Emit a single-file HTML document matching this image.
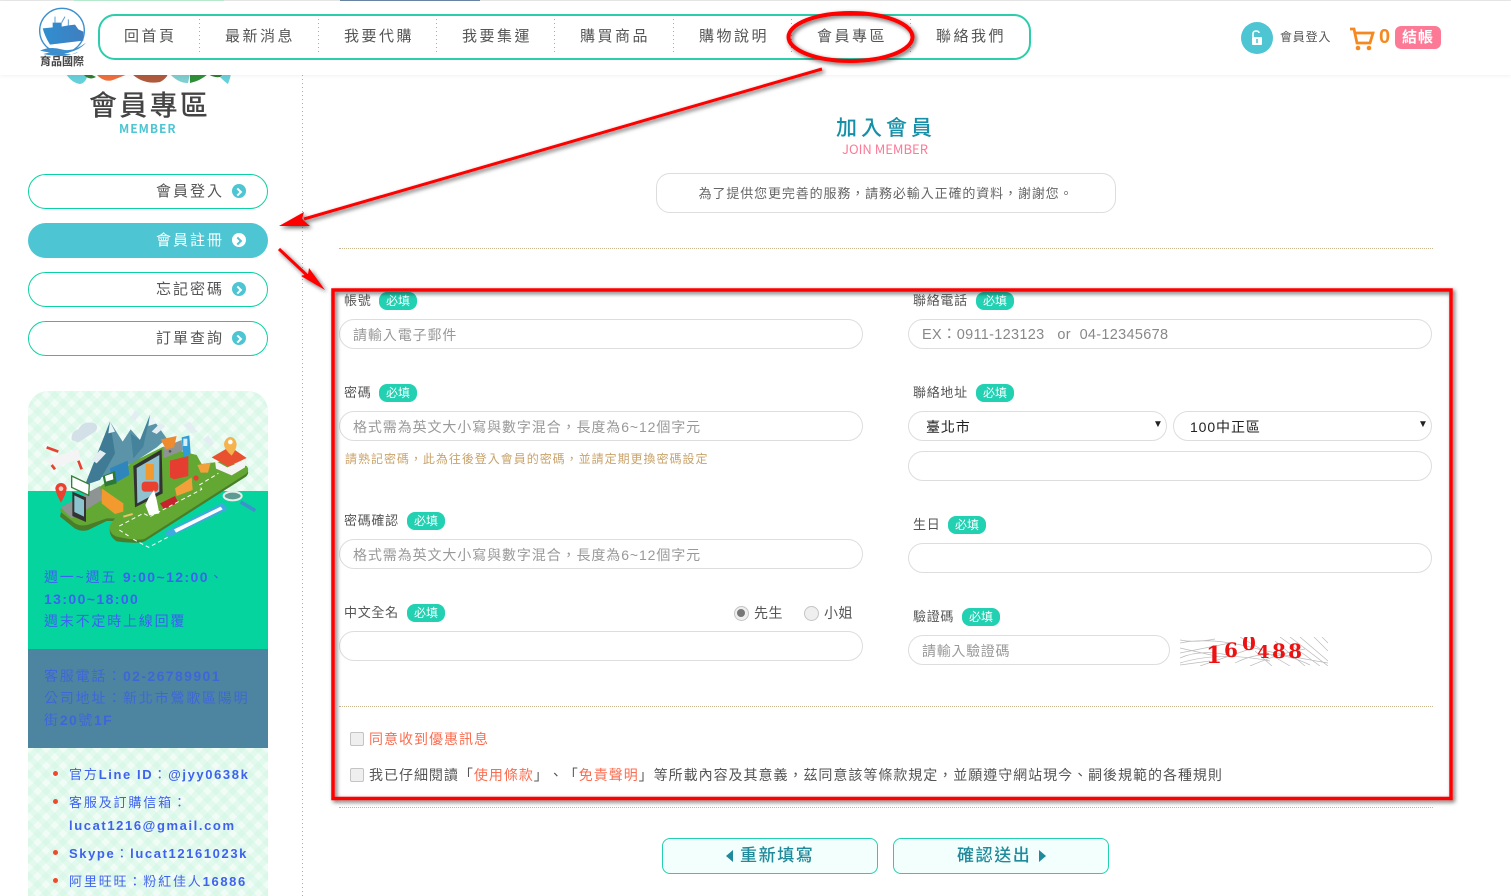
<!DOCTYPE html>
<html lang="zh-Hant"><head><meta charset="utf-8"><title>加入會員</title>
<style>
html,body{margin:0;padding:0;background:#fff}
#p{position:relative;width:1511px;height:896px;overflow:hidden;background:#fff;font-family:"Liberation Sans","Noto Sans CJK TC",sans-serif;color:#555;text-spacing-trim:space-all}
#p div,#p>svg{position:absolute}
.t{white-space:nowrap;line-height:20px}
.nav{top:27px;height:20px;font-size:15px;letter-spacing:2.5px;color:#555;white-space:nowrap;line-height:20px}
.sep{top:19px;height:36px;width:1px;background:repeating-linear-gradient(#aaa 0 1px,transparent 1px 4px)}
.side{left:28px;width:238px;height:33px;border:1px solid #0bd2a4;border-radius:18px;background:#fff}
.side .l{left:127px;top:7px;font-size:15px;letter-spacing:2px;color:#555;line-height:20px;white-space:nowrap}
.side .c{left:203px;top:9px;width:14px;height:14px;border-radius:50%;background:#4dc5d2}
.side .c:after{content:"";position:absolute;left:3px;top:4.500px;width:4px;height:4px;border-top:2px solid #fff;border-right:2px solid #fff;transform:rotate(45deg)}
.on{background:#4dc5d2;height:35px;border:0;width:240px}
.on .l{color:#fff;left:128px;top:8px}
.on .c{background:#fff;left:204px;top:10px}
.on .c:after{border-color:#4dc5d2}
.lb{font-size:13px;letter-spacing:.7px;color:#555;line-height:18px;white-space:nowrap}
.req{width:38px;height:18px;border-radius:8px;background:#22d0b2;color:#fff;font-size:12px;line-height:18px;text-align:center}
.in{height:28px;border:1px solid #ddd;border-radius:15px;background:#fff;color:#999;font-size:14px;letter-spacing:.9px;line-height:30px;white-space:nowrap}
.in span{padding-left:13px}
.blue{color:#3b62f0;font-size:14px;letter-spacing:1.8px;line-height:22px}
.blue b{letter-spacing:1.4px}
.li{left:69px;font-size:13px;letter-spacing:1.85px;color:#3f62ee;line-height:20px;white-space:nowrap}
.li b{letter-spacing:1.6px}
.pat{background-color:#f2fcf7;background-image:repeating-linear-gradient(45deg,rgba(205,245,225,.42) 0 6px,transparent 6px 12px),repeating-linear-gradient(-45deg,rgba(205,245,225,.42) 0 6px,transparent 6px 12px)}
.dot{width:5px;height:5px;border-radius:50%;background:#ee4a2c;left:53px}
.cb{width:12px;height:12px;border:1px solid #c4c4c4;background:#efefef;border-radius:2px}
.btn{width:214px;height:34px;border:1px solid #22d0b2;border-radius:8px;background:#f2fffd}
.bt{top:846px;font-size:17px;font-weight:500;letter-spacing:1.6px;color:#1f8a9c;line-height:20px;white-space:nowrap}
.hd{font-family:"Noto Sans CJK TC",sans-serif}
</style></head><body><div id="p">

<!-- top strip remnants -->
<div style="left:0;top:0;width:1511px;height:1px;background:#e8e8e8"></div>
<div style="left:74px;top:0;width:150px;height:1px;background:#b9ecd0"></div>
<div style="left:340px;top:0;width:140px;height:1px;background:#6a87a5"></div>

<!-- sidebar title art -->
<svg style="left:60px;top:74px" width="175" height="12" viewBox="0 0 175 12">
<path d="M6 0Q12 9 20 10Q26 9 28 0Z" fill="#66cfd9"/><path d="M23 0Q29 7 36 3L30 0Z" fill="#2d7f2f"/>
<path d="M36 0Q44 9 53 6L68 0Z" fill="#ef6f3d"/><path d="M72 0Q84 11 100 8Q106 5 108 0Z" fill="#b05a3c"/>
<path d="M110 0Q118 9 128 9L130 0Z" fill="#7fced0"/><path d="M130 0L130 9Q140 7 148 0Z" fill="#2f8f38"/>
<path d="M148 0Q154 4 160 3L164 0Z" fill="#2d7f2f"/><path d="M160 3Q166 9 168 10Q170 5 171 0H165Z" fill="#66cfd9"/>
</svg>
<div class="t" style="left:89px;top:89px;font-size:28px;line-height:34px;letter-spacing:2.300px;color:#444;font-weight:500">會員專區</div>
<div class="t hd" style="left:119px;top:121px;font-size:12px;line-height:16px;letter-spacing:1px;color:#4dc5d2;font-weight:bold">MEMBER</div>

<!-- header -->
<div style="left:0;top:1px;width:1511px;height:74px;background:#fff;box-shadow:0 1px 4px rgba(0,0,0,.06)"></div>
<svg style="left:38px;top:7px" width="50" height="50" viewBox="114 21 150 150">
<defs><linearGradient id="sh" x1="0" x2="1"><stop offset="0" stop-color="#2f8fd0"/><stop offset="1" stop-color="#3f7fc0"/></linearGradient></defs>
<circle cx="186" cy="92" r="67" fill="#fff" stroke="#3b8fcf" stroke-width="4"/>
<path d="M128 85L158 82V68H185V80L205 76L225 74L235 88L250 95L250 122L200 128L150 134Q135 110 128 85Z" fill="url(#sh)"/>
<path d="M165 68V50M185 68L195 50M205 76V58" stroke="#5a9dd0" stroke-width="3" fill="none"/>
<path d="M120 152Q150 138 185 148T258 128Q235 155 195 158T120 152Z" fill="#3b8fcf"/>
<path d="M130 162Q160 152 190 160T235 155Q205 170 175 168T130 162Z" fill="#3b8fcf"/>
</svg>
<div class="t" style="left:40px;top:55px;font-size:11px;line-height:15px;font-weight:bold;color:#444">育品國際</div>

<div style="left:98px;top:14px;width:929px;height:42px;border:2px solid #2ccdab;border-radius:17px;background:#fff"></div>
<div class="nav" style="left:124px">回首頁</div><div class="sep" style="left:199px"></div>
<div class="nav" style="left:225px">最新消息</div><div class="sep" style="left:318px"></div>
<div class="nav" style="left:344px">我要代購</div><div class="sep" style="left:436px"></div>
<div class="nav" style="left:462px">我要集運</div><div class="sep" style="left:554px"></div>
<div class="nav" style="left:580px">購買商品</div><div class="sep" style="left:673px"></div>
<div class="nav" style="left:699px">購物說明</div><div class="sep" style="left:791px"></div>
<div class="nav" style="left:817px">會員專區</div><div class="sep" style="left:910px"></div>
<div class="nav" style="left:936px">聯絡我們</div>

<div style="left:1241px;top:22px;width:32px;height:32px;border-radius:50%;background:#4dc5d2"></div>
<svg style="left:1249px;top:29px" width="16" height="18" viewBox="0 0 16 18"><path d="M4 8V5Q4 2 7 2T10 4" fill="none" stroke="#fff" stroke-width="1.6"/><rect x="3" y="8" width="10" height="8" rx="1" fill="#fff"/><rect x="7.200" y="10" width="1.6" height="4" fill="#4dc5d2"/></svg>
<div class="t" style="left:1280px;top:27px;font-size:12px;letter-spacing:.8px;color:#555">會員登入</div>
<svg style="left:1348px;top:26px" width="28" height="26" viewBox="0 0 28 26"><path d="M2 3H6L9 17H22L25 7H7" fill="none" stroke="#f5891f" stroke-width="2.800"/><circle cx="10" cy="22" r="2.300" fill="#f5891f"/><circle cx="21" cy="22" r="2.300" fill="#f5891f"/></svg>
<div class="t" style="left:1379px;top:27px;font-size:20px;font-weight:bold;color:#f5891f">0</div>
<div style="left:1395px;top:26px;width:46px;height:23px;border-radius:6px;background:#fd7a97;color:#fff;font-size:15px;font-weight:bold;text-align:center;line-height:23px;letter-spacing:1px">結帳</div>

<!-- divider -->
<div style="left:302px;top:75px;height:821px;width:1px;background:repeating-linear-gradient(#aaa 0 1px,transparent 1px 4px)"></div>

<!-- side menu -->
<div class="side" style="top:174px"><div class="l">會員登入</div><div class="c"></div></div>
<div class="side on" style="top:223px"><div class="l">會員註冊</div><div class="c"></div></div>
<div class="side" style="top:272px"><div class="l">忘記密碼</div><div class="c"></div></div>
<div class="side" style="top:321px"><div class="l">訂單查詢</div><div class="c"></div></div>

<!-- side panel -->
<div class="pat" style="left:28px;top:391px;width:240px;height:100px;border-radius:20px 20px 0 0"></div>
<div style="left:28px;top:491px;width:240px;height:158px;background:#05d49f"></div>
<div style="left:28px;top:649px;width:240px;height:99px;background:#4d85a1"></div>
<div class="pat" style="left:28px;top:748px;width:240px;height:148px"></div>

<svg style="left:0;top:390px" width="300" height="260" viewBox="0 0 900 780">
<!-- base -->
<path d="M180 372L185 350L300 290L400 215L490 170L590 195L605 222L660 215L740 228Q750 240 738 252L436 445Q420 455 350 446Q325 430 330 405L345 385L320 385L265 412Q245 418 225 408Z" fill="#4a7d2a" transform="translate(0 8)"/>
<path d="M180 364L185 350L300 290L400 215L490 170L590 195L605 222L660 215L740 228Q750 240 738 252L436 445Q420 455 350 440Q325 430 330 405L345 385L320 385L265 404Q245 410 225 400Z" fill="#63a833"/>
<path d="M182 352L300 288L306 330L215 385Z" fill="#8e9494"/>
<path d="M490 172L545 150L548 182L490 205Z" fill="#8e9494"/>
<!-- mountains -->
<path d="M255 285L330 95L368 155L392 118L420 150L450 75L500 145L470 172L400 218L330 250Z" fill="#5b93a8"/>
<path d="M330 95L345 190L300 270L255 285Z" fill="#3f7b94"/>
<path d="M450 75L430 170L400 205L392 130L420 150Z" fill="#44839b"/>
<path d="M330 95L345 125L325 130ZM450 75L470 100L445 108Z" fill="#e8f4f6"/>
<!-- clouds -->
<path d="M215 150Q212 125 235 118Q250 90 285 100Q298 112 285 125L235 157Z" fill="#d4e0e8"/>
<path d="M390 85L405 62L420 72L405 92ZM455 125L480 100L497 108L470 132ZM550 105L570 95L592 125L575 130ZM610 148L625 135L642 162L628 170ZM275 210L300 180L318 190L290 220Z" fill="#e4edf1"/>
<!-- truck -->
<path d="M330 235L383 212L388 255L335 285Z" fill="#2e86bd"/><path d="M308 258L345 243L350 280L315 290Z" fill="#2d7a35"/><path d="M315 258L338 250L340 268L318 275Z" fill="#fff"/>
<!-- tablet -->
<path d="M400 228L485 178L488 310L405 352Z" fill="#333"/><path d="M410 234L478 195L478 305L412 340Z" fill="#8fc1cf"/>
<rect x="437" y="222" width="25" height="48" fill="#f29a2e"/><rect x="425" y="275" width="50" height="30" rx="10" fill="#e8412f"/>
<path d="M445 325L462 300L470 330L478 370L448 376L436 345Z" fill="#fff"/>
<!-- cart, kiosk, bag -->
<path d="M482 148L530 138L522 172L498 178Z" fill="#ee8b2f"/><circle cx="510" cy="184" r="4" fill="#555"/>
<path d="M545 142L568 136L572 190L550 205Z" fill="#2f9dd8"/><rect x="550" y="146" width="12" height="22" fill="#d8eef8"/>
<path d="M510 212L565 198L565 258L522 268L510 262Z" fill="#e53d30"/>
<path d="M525 295L575 262L578 300L530 318Z" fill="#f2a03a"/><circle cx="588" cy="264" r="8" fill="#e53d30"/>
<path d="M592 225L632 218L624 248L602 248Z" fill="#f2a03a"/>
<path d="M480 340L525 318L535 338L492 358Z" fill="#c8232c"/>
<!-- shop -->
<path d="M645 212L682 232L735 210L735 232L695 256L648 236Z" fill="#f4f4f4"/>
<path d="M635 202L690 170L740 204L685 230Z" fill="#e8502f"/>
<path d="M672 165A19 24 0 1 1 710 165Q708 180 695 197Q675 180 672 165Z" fill="#f6b24c"/><circle cx="691" cy="156" r="7" fill="#fff"/>
<!-- plane -->
<path d="M130 210L235 178L242 205L170 232Z" fill="#f4f4f4"/><path d="M140 172L175 185M235 212L245 238M155 225L165 238" stroke="#e8412f" stroke-width="8"/>
<!-- money, pin, phone, wallet -->
<path d="M215 258L268 283L266 316L215 292Z" fill="#fff" stroke="#3a7d3a" stroke-width="4"/>
<path d="M166 296A17 17 0 1 1 200 296Q198 312 183 338Q168 312 166 296Z" fill="#e8412f"/><circle cx="183" cy="296" r="7" fill="#f8c8c0"/>
<path d="M217 305L258 322L258 396L217 378Z" fill="#333"/><path d="M223 316L252 330L252 380L223 366Z" fill="#8cc3cf"/>
<path d="M305 295L370 340L370 365L345 372L305 340Z" fill="#f29a2e"/>
<path d="M370 380L398 372" stroke="#e8c468" stroke-width="6"/>
<!-- search bar, magnifier -->
<path d="M497 425L665 340Q682 345 680 360L510 440Q496 438 497 425Z" fill="#3fa9e0"/><path d="M522 418L662 350L668 358L528 428Z" fill="#fff"/>
<ellipse cx="698" cy="318" rx="27" ry="13" fill="#5d9a90" stroke="#e6efec" stroke-width="6"/>
<path d="M722 336L766 362" stroke="#3c93cc" stroke-width="11"/>
<!-- dashes -->
<g fill="none" stroke="#fff" stroke-width="3" stroke-dasharray="12 9">
<path d="M400 448L446 472L510 438"/>
<path d="M358 408L430 370L450 380L605 298L598 285L655 250"/>
<path d="M358 420L392 442"/>
</g>
</svg>

<div class="blue" style="left:44px;top:566px;width:222px">週一~週五 <b>9:00~12:00</b>、<br><b>13:00~18:00</b><br>週末不定時上線回覆</div>
<div class="blue" style="left:44px;top:665px;width:222px;color:#3f66d6">客服電話：<b>02-26789901</b><br>公司地址：新北市鶯歌區陽明<br>街<b>20</b>號<b>1F</b></div>

<div class="dot" style="top:771px"></div><div class="dot" style="top:799px"></div><div class="dot" style="top:850px"></div><div class="dot" style="top:878px"></div>
<div class="li" style="top:765px">官方<b>Line ID</b>：<b>@jyy0638k</b></div>
<div class="li" style="top:793px">客服及訂購信箱：</div>
<div class="li" style="top:816px"><b>lucat1216@gmail.com</b></div>
<div class="li" style="top:844px"><b>Skype</b>：<b>lucat12161023k</b></div>
<div class="li" style="top:872px">阿里旺旺：粉紅佳人<b>16886</b></div>

<!-- heading -->
<div class="t" style="left:836px;top:116px;font-size:21px;line-height:26px;letter-spacing:4px;color:#1690a8;font-weight:500">加入會員</div>
<div class="t hd" style="left:842px;top:141px;font-size:13px;line-height:16px;color:#fd7a97">JOIN MEMBER</div>
<div style="left:656px;top:173px;width:458px;height:38px;border:1px solid #ddd;border-radius:14px;text-align:center;font-size:13px;line-height:40px;color:#666;letter-spacing:.88px;white-space:nowrap">為了提供您更完善的服務，請務必輸入正確的資料，謝謝您。</div>
<div style="left:339px;top:248px;width:1094px;height:0;border-top:1px dotted #c9b58f"></div>

<!-- form left -->
<div class="lb" style="left:344px;top:292px">帳號</div><div class="req" style="left:379px;top:292px">必填</div>
<div class="in" style="left:339px;top:319px;width:522px"><span>請輸入電子郵件</span></div>
<div class="lb" style="left:344px;top:384px">密碼</div><div class="req" style="left:379px;top:384px">必填</div>
<div class="in" style="left:339px;top:411px;width:522px"><span>格式需為英文大小寫與數字混合，長度為6~12個字元</span></div>
<div class="t" style="left:345px;top:449px;font-size:12px;letter-spacing:.98px;color:#c9a36a">請熟記密碼，此為往後登入會員的密碼，並請定期更換密碼設定</div>
<div class="lb" style="left:344px;top:512px">密碼確認</div><div class="req" style="left:407px;top:512px">必填</div>
<div class="in" style="left:339px;top:539px;width:522px"><span>格式需為英文大小寫與數字混合，長度為6~12個字元</span></div>
<div class="lb" style="left:344px;top:604px">中文全名</div><div class="req" style="left:407px;top:604px">必填</div>
<div style="left:734px;top:606px;width:13px;height:13px;border:1px solid #c4c4c4;border-radius:50%;background:#efefef"></div>
<div style="left:737px;top:609px;width:8px;height:8px;border-radius:50%;background:#777"></div>
<div class="t" style="left:754px;top:603px;font-size:14px;letter-spacing:.5px;color:#555">先生</div>
<div style="left:804px;top:606px;width:13px;height:13px;border:1px solid #c4c4c4;border-radius:50%;background:#efefef"></div>
<div class="t" style="left:824px;top:603px;font-size:14px;letter-spacing:.5px;color:#555">小姐</div>
<div class="in" style="left:339px;top:631px;width:522px"></div>

<!-- form right -->
<div class="lb" style="left:913px;top:292px">聯絡電話</div><div class="req" style="left:976px;top:292px">必填</div>
<div class="in" style="left:908px;top:319px;width:522px;font-size:14.500px;letter-spacing:.3px;color:#888"><span>EX：0911-123123 &nbsp; or &nbsp;04-12345678</span></div>
<div class="lb" style="left:913px;top:384px">聯絡地址</div><div class="req" style="left:976px;top:384px">必填</div>
<div class="in" style="left:908px;top:411px;width:257px;color:#222"><span style="padding-left:17px">臺北市</span></div>
<div class="t" style="left:1153px;top:415px;font-size:10px;color:#222">▼</div>
<div class="in" style="left:1173px;top:411px;width:257px;color:#222"><span style="padding-left:16px">100中正區</span></div>
<div class="t" style="left:1418px;top:415px;font-size:10px;color:#222">▼</div>
<div class="in" style="left:908px;top:451px;width:522px"></div>
<div class="lb" style="left:913px;top:516px">生日</div><div class="req" style="left:948px;top:516px">必填</div>
<div class="in" style="left:908px;top:543px;width:522px"></div>
<div class="lb" style="left:913px;top:608px">驗證碼</div><div class="req" style="left:962px;top:608px">必填</div>
<div class="in" style="left:908px;top:635px;width:260px;letter-spacing:.7px"><span>請輸入驗證碼</span></div>
<svg style="left:1180px;top:637px" width="148" height="29" viewBox="0 0 148 29">
<path d="M0 6Q30 0 70 10T148 26M0 16L50 6M0 26Q40 14 90 24M100 0L140 29M120 0L148 24M60 0L110 29M20 29L70 12M0 11L40 20M125 29L95 4M0 21Q20 12 48 18M0 3Q15 6 35 2M110 0L148 29M134 0L148 14M142 0L148 6M55 26Q90 8 130 28M70 29Q100 16 125 12M92 29L75 14M0 28L30 24" stroke="#bbb" stroke-width=".7" fill="none"/>
<text x="26" y="26" font-family="DejaVu Serif" font-weight="bold" font-size="23" fill="#e11">1</text>
<text x="44" y="20" font-family="DejaVu Serif" font-weight="bold" font-size="20" fill="#e11">6</text>
<text x="62" y="13" font-family="DejaVu Serif" font-weight="bold" font-size="20" fill="#e11">0</text>
<text x="77" y="21" font-family="DejaVu Serif" font-weight="bold" font-size="18" fill="#e11">4</text>
<text x="92" y="21" font-family="DejaVu Serif" font-weight="bold" font-size="20" fill="#e11" textLength="30">88</text>
</svg>

<div style="left:339px;top:706px;width:1094px;height:0;border-top:1px dotted #c9b58f"></div>
<div class="cb" style="left:350px;top:732px"></div>
<div class="t" style="left:369px;top:729px;font-size:14px;letter-spacing:1px;color:#fb6d50">同意收到優惠訊息</div>
<div class="cb" style="left:350px;top:768px"></div>
<div class="t" style="left:369px;top:765px;font-size:14px;letter-spacing:.98px;color:#555">我已仔細閱讀「<span style="color:#fb6d50">使用條款</span>」、「<span style="color:#fb6d50">免責聲明</span>」等所載內容及其意義，茲同意該等條款規定，並願遵守網站現今、嗣後規範的各種規則</div>
<div style="left:339px;top:807px;width:1094px;height:0;border-top:1px dotted #c9b58f"></div>

<div class="btn" style="left:662px;top:838px"></div>
<div class="btn" style="left:893px;top:838px"></div>
<svg style="left:726px;top:850px" width="8" height="12" viewBox="0 0 8 12"><path d="M7 0V12L0 6Z" fill="#1f8a9c"/></svg>
<div class="bt" style="left:740px">重新填寫</div>
<div class="bt" style="left:957px">確認送出</div>
<svg style="left:1038px;top:850px" width="8" height="12" viewBox="0 0 8 12"><path d="M1 0V12L8 6Z" fill="#1f8a9c"/></svg>

<!-- red annotations -->
<svg style="left:0;top:0" width="1511" height="896" viewBox="0 0 1511 896">
<defs><filter id="s" x="-5%" y="-5%" width="110%" height="110%"><feDropShadow dx="2" dy="2" stdDeviation="2" flood-color="#000" flood-opacity=".6"/></filter></defs>
<g filter="url(#s)">
<ellipse cx="850.500" cy="37" rx="62" ry="24" fill="none" stroke="#f00" stroke-width="4"/>
<path d="M822 69L304 219" stroke="#f00" stroke-width="3" fill="none"/>
<path d="M279 226L304 212L302 219L310 226Z" fill="#f00"/>
<path d="M279 249L312 280" stroke="#f00" stroke-width="3" fill="none"/>
<path d="M325 290L301 276L308 274L309 268Z" fill="#f00"/>
<rect x="333" y="290" width="1118" height="508.500" fill="none" stroke="#f00" stroke-width="3.500"/>
</g></svg>
</div></body></html>
